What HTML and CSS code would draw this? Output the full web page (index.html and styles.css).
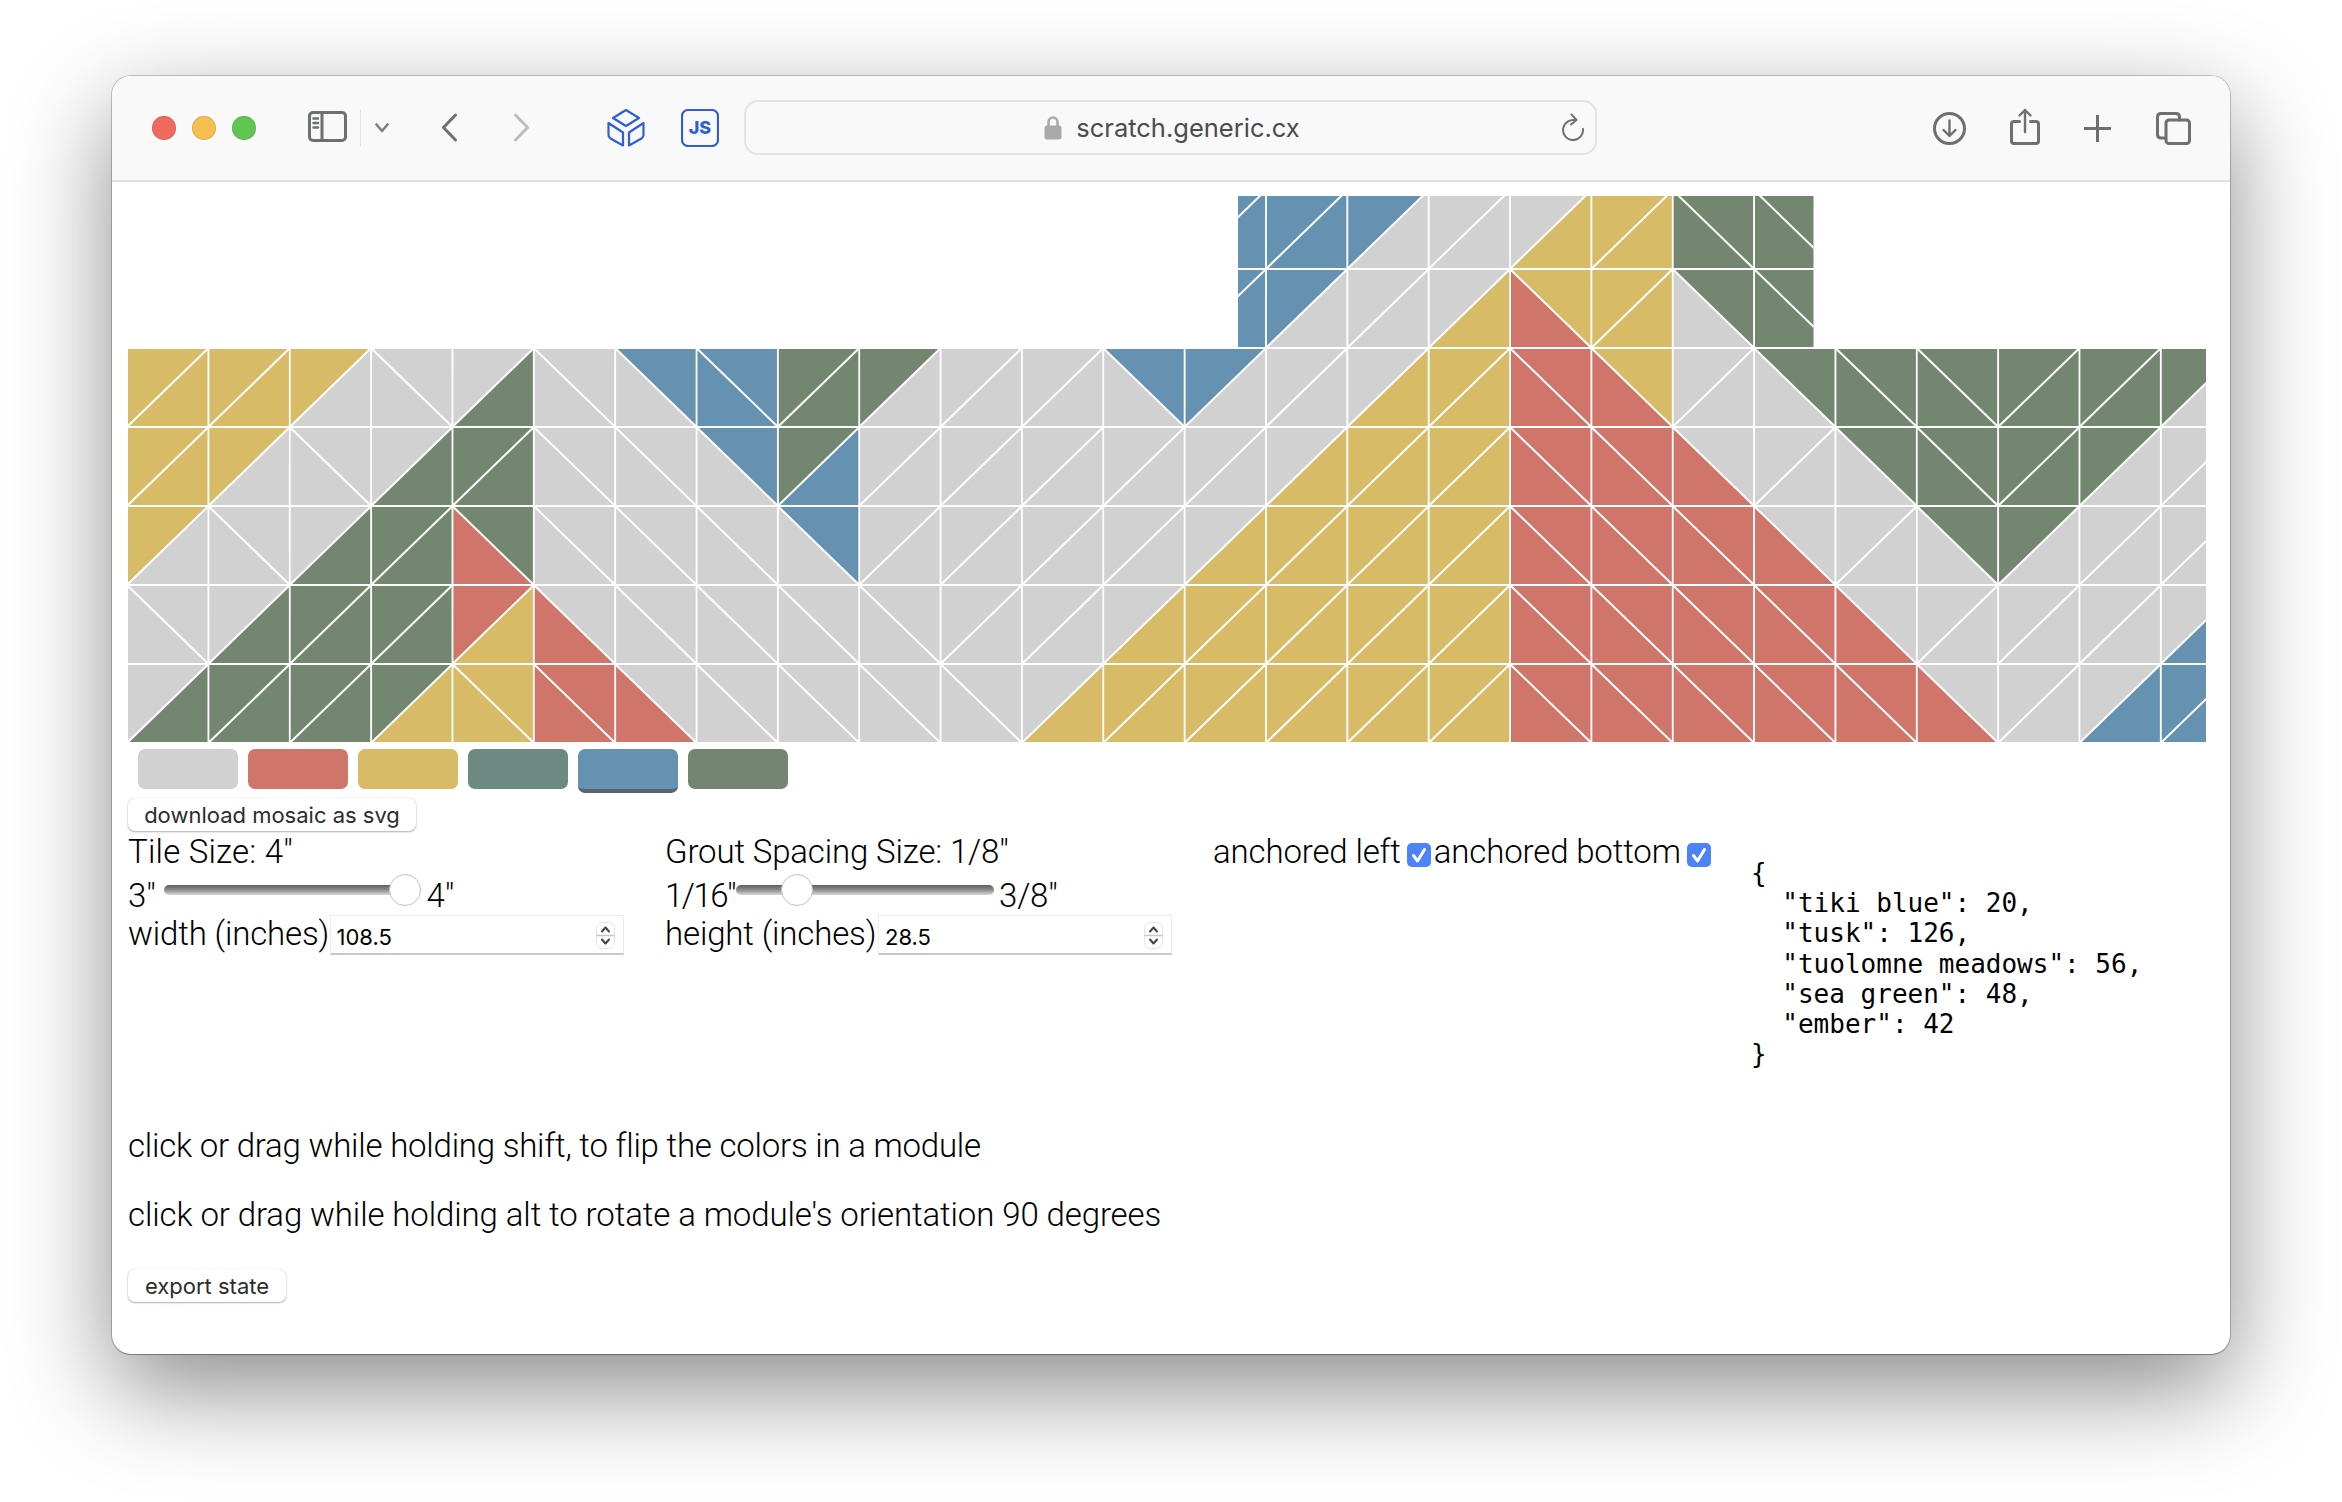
FILE: index.html
```html
<!DOCTYPE html>
<html lang="en">
<head>
<meta charset="utf-8">
<title>scratch.generic.cx</title>
<link rel="stylesheet" href="styles.css">
</head>
<body>
<div class="window">
  <header class="toolbar">
    <div class="lights"><span class="light red"></span><span class="light yellow"></span><span class="light green"></span></div>
    <svg class="ico sidebar" width="39" height="31" viewBox="0 0 39 31"><rect x="1.5" y="1.5" width="36" height="28" rx="3.5"/><path d="M14 1.5V29.5"/><path class="thin" d="M5.5 7.5H10M5.5 12H10M5.5 16.5H10"/></svg>
    <span class="divider"></span>
    <svg class="ico chev-down" width="14" height="10" viewBox="0 0 14 10"><path d="M1.5 1.5L7 8L12.5 1.5"/></svg>
    <svg class="ico back" width="17" height="29" viewBox="0 0 17 29"><path d="M14.5 2L2.5 14.5L14.5 27"/></svg>
    <svg class="ico forward" width="17" height="29" viewBox="0 0 17 29"><path d="M2.5 2L14.5 14.5L2.5 27"/></svg>
    <svg class="ext pkg" width="38" height="38" viewBox="0 0 38 38"><path d="M19 1L32 9L19 17L6 9Z"/><path d="M1.5 14L16 23.5V36.5L3.5 29.5Q1.5 28 1.5 26Z"/><path d="M36.5 14L22 23.5V36.5L34.5 29.5Q36.5 28 36.5 26Z"/></svg>
    <svg class="ext js" width="38" height="38" viewBox="0 0 38 38"><rect x="1" y="1" width="36" height="36" rx="6"/><text x="19" y="25" text-anchor="middle">JS</text></svg>
    <div class="urlbar">
      <svg class="lock" width="18" height="25" viewBox="0 0 18 25"><path class="shackle" d="M4.5 12V7a4.5 4.5 0 0 1 9 0V12"/><rect x="0.5" y="10.5" width="17" height="14" rx="2.5"/></svg>
      <span class="url">scratch.generic.cx</span>
      <svg class="ico reload" width="24" height="28" viewBox="0 0 24 28"><path class="thin" d="M15 7.5A10 10 0 1 0 22 16M10.5 1.5L15.5 7L10 11.5"/></svg>
    </div>
    <svg class="ico download" width="33" height="33" viewBox="0 0 33 33"><circle cx="16.5" cy="16.5" r="15"/><path class="thin" d="M16.5 8.5V24M10.5 18L16.5 24L22.5 18"/></svg>
    <svg class="ico share" width="30" height="37" viewBox="0 0 30 37"><path d="M9.5 13.5H4Q1.5 13.5 1.5 16V33Q1.5 35.5 4 35.5H26Q28.5 35.5 28.5 33V16Q28.5 13.5 26 13.5H20.5"/><path class="thin" d="M15 24V2M9.5 7.5L15 2L20.5 7.5"/></svg>
    <svg class="ico plus" width="27" height="27" viewBox="0 0 27 27"><path d="M13.5 0.5V26.5M0.5 13.5H26.5"/></svg>
    <svg class="ico tabs" width="35" height="33" viewBox="0 0 35 33"><path d="M8 26H5Q1.5 26 1.5 22.5V5Q1.5 1.5 5 1.5H20Q23.5 1.5 23.5 5V8"/><rect x="10" y="8" width="23.5" height="23.5" rx="3"/></svg>
  </header>

  <main class="page">
    <svg id="mosaic" class="mosaic" width="2078" height="546" viewBox="0 0 2078 546" role="img" aria-label="tile mosaic"></svg>

    <div class="swatches">
      <span class="swatch tusk"></span>
      <span class="swatch ember"></span>
      <span class="swatch tuolomne"></span>
      <span class="swatch teal"></span>
      <span class="swatch tiki selected"></span>
      <span class="swatch sea"></span>
    </div>

    <button class="btn btn-download" type="button">download mosaic as svg</button>

    <section class="controls">
      <div class="col col-tile">
        <div class="row-label">Tile Size: 4"</div>
        <div class="row-slider">
          <span class="end-label">3"</span>
          <input class="slider slider-tile" type="range" min="3" max="4" step="0.25" value="4">
          <span>4"</span>
        </div>
        <label class="row-input">
          <span class="input-label">width (inches)</span>
          <span class="num"><input class="num-field" type="number" value="108.5" step="0.5"><svg class="spin" width="19" height="27" viewBox="0 0 19 27"><rect x="0.5" y="0.5" width="18" height="26" rx="6"/><path class="sep" d="M1 13.5H18"/><path d="M6 9.5L9.5 5.5L13 9.5M6 17.5L9.5 21.5L13 17.5"/></svg></span>
        </label>
      </div>
      <div class="col col-grout">
        <div class="row-label">Grout Spacing Size: 1/8"</div>
        <div class="row-slider">
          <span class="end-label">1/16"</span>
          <input class="slider slider-grout" type="range" min="1" max="6" step="1" value="2">
          <span>3/8"</span>
        </div>
        <label class="row-input">
          <span class="input-label">height (inches)</span>
          <span class="num"><input class="num-field" type="number" value="28.5" step="0.5"><svg class="spin" width="19" height="27" viewBox="0 0 19 27"><rect x="0.5" y="0.5" width="18" height="26" rx="6"/><path class="sep" d="M1 13.5H18"/><path d="M6 9.5L9.5 5.5L13 9.5M6 17.5L9.5 21.5L13 17.5"/></svg></span>
        </label>
      </div>
      <div class="col col-anchor">
        <label class="anchor">anchored left<span class="check"><svg width="24" height="24" viewBox="0 0 24 24"><path d="M6.5 12.5L10.5 18L17.5 6.5"/></svg></span></label>
        <label class="anchor">anchored bottom<span class="check"><svg width="24" height="24" viewBox="0 0 24 24"><path d="M6.5 12.5L10.5 18L17.5 6.5"/></svg></span></label>
      </div>
      <pre class="counts">{
  "tiki blue": 20,
  "tusk": 126,
  "tuolomne meadows": 56,
  "sea green": 48,
  "ember": 42
}</pre>
    </section>

    <p class="hint hint-first">click or drag while holding shift, to flip the colors in a module</p>
    <p class="hint">click or drag while holding alt to rotate a module's orientation 90 degrees</p>

    <button class="btn btn-export" type="button">export state</button>
  </main>
</div>
<script src="app.js"></script>
</body>
</html>
```
FILE: styles.css
```css
* { box-sizing: border-box; }
html, body { margin: 0; height: 100%; }
body {
  background: #fff;
  padding: 76px 0 0 112px;
  overflow: hidden;
  font-family: Roboto, "Liberation Sans", sans-serif;
  font-weight: 300;
  color: #000;
}
.window {
  width: 2118px;
  height: 1278px;
  border-radius: 19px;
  background: #fff;
  overflow: hidden;
  box-shadow: 0 0 0 1px rgba(0,0,0,.2), 0 1px 1px rgba(0,0,0,.2), 0 35px 100px rgba(0,0,0,.46);
}

/* toolbar */
.toolbar {
  height: 106px;
  display: flex;
  align-items: center;
  padding-left: 40px;
  background: #f8f9f8;
  border-bottom: 2px solid #e0e0e0;
}
.lights { display: flex; gap: 16.5px; }
.light { width: 23.5px; height: 23.5px; border-radius: 50%; border: 1px solid rgba(0,0,0,.08); }
.light.red { background: #ee6a5e; }
.light.yellow { background: #f5bf4f; }
.light.green { background: #61c554; }
.ico { fill: none; stroke: #6e6f6f; stroke-width: 3; stroke-linecap: round; stroke-linejoin: round; flex: none; }
.ico .thin { stroke-width: 2.4; }
.sidebar { margin-left: 52px; margin-top: -3px; }
.divider { width: 1px; height: 36px; background: #e2e3e2; margin-left: 13px; margin-top: -1px; }
.chev-down { margin-left: 14px; stroke: #7d7e7e; stroke-width: 2.6; }
.back { margin-left: 52px; margin-top: -1px; }
.forward { margin-left: 55px; margin-top: -1px; stroke: #bcbdbd; }
.ext { flex: none; fill: none; stroke: #2f5fd8; stroke-width: 2.2; stroke-linejoin: round; }
.pkg { margin-left: 77px; }
.js { margin-left: 36px; }
.js text { fill: #2f5fd8; stroke: none; font: 800 18px Inter, sans-serif; }
.urlbar {
  width: 853px;
  height: 55px;
  margin-left: 25px;
  margin-top: -1px;
  border: 2px solid #e3e4e3;
  border-radius: 14px;
  position: relative;
  display: flex;
  align-items: center;
  justify-content: center;
  gap: 14px;
  padding-left: 4px;
}
.lock { fill: #a9aaaa; flex: none; }
.lock .shackle { fill: none; stroke: #a9aaaa; stroke-width: 2.6; }
.url { font: 400 25.5px Inter, sans-serif; color: #4b4c4c; }
.reload { position: absolute; right: 10px; top: 11px; }
.reload .thin { stroke-width: 2; }
.download { margin-left: 336px; }
.share { margin-left: 44px; margin-top: -4px; }
.plus { margin-left: 44px; }
.tabs { margin-left: 45px; }

/* page */
.page { padding: 14px 0 0 16px; }
.mosaic { display: block; }
.tile-g { fill: #d1d1d1; }
.tile-r { fill: #d0756a; }
.tile-y { fill: #d8bb67; }
.tile-b { fill: #6592b0; }
.tile-n { fill: #73866f; }
.diag { stroke: #fff; stroke-width: 2; }

.swatches { display: flex; align-items: flex-start; gap: 10px; margin: 7px 0 0 10px; height: 44px; }
.swatch { width: 100px; height: 40px; border-radius: 7px; box-sizing: content-box; }
.swatch.selected { border-bottom: 4px solid #5f6366; }
.tusk { background: #d1d1d1; }
.ember { background: #d0756a; }
.tuolomne { background: #d8bb67; }
.teal { background: #6d8a82; }
.tiki { background: #6592b0; }
.sea { background: #73866f; }

.btn {
  display: block;
  height: 33px;
  padding: 0;
  border: 0;
  border-radius: 7px;
  background: #fff;
  box-shadow: 0 1px 2px rgba(0,0,0,.3), 0 0 1px rgba(0,0,0,.25);
  font: 400 22px Inter, sans-serif;
  color: #2c2c2c;
}
.btn-download { margin-top: 5px; width: 288px; }
.btn-export { margin-top: 34px; width: 158px; }

.controls { display: flex; align-items: flex-start; font-size: 33px; letter-spacing: -.15px; }
.col { flex: none; padding-top: 1px; }
.col-tile { width: 537px; }
.col-grout { width: 548px; }
.col-anchor { width: 538px; display: flex; }
.row-label { height: 40px; line-height: 40px; white-space: nowrap; }
.col-tile .row-label { letter-spacing: .2px; }
.row-slider { height: 43px; display: flex; align-items: center; white-space: nowrap; }
.row-slider span { margin-top: 4px; }
.row-input { height: 40px; display: flex; align-items: center; white-space: nowrap; }
.col-tile .end-label { width: 35.5px; }
.col-grout .end-label { width: 70.5px; letter-spacing: -1.5px; }
.col-tile .input-label { width: 201.5px; }
.col-grout .input-label { width: 213px; }
.input-label { margin-top: -4px; }

.slider {
  -webkit-appearance: none;
  appearance: none;
  height: 32px;
  margin: 0 6px 8px 0;
  padding: 0;
  background: transparent;
  flex: none;
}
.slider-tile { width: 257px; }
.slider-grout { width: 258.5px; margin-right: 5px; }
.slider::-webkit-slider-runnable-track {
  height: 10px;
  border-radius: 5px;
  background: linear-gradient(#5e5e5e, #8e8e8e 50%, #d8d8d8);
}
.slider::-webkit-slider-thumb {
  -webkit-appearance: none;
  width: 32px;
  height: 32px;
  margin-top: -11px;
  border-radius: 50%;
  background: #fff;
  border: 1px solid #c4c4c4;
}

.num { position: relative; display: block; }
.num-field {
  display: block;
  width: 294px;
  height: 40px;
  padding: 5px 0 0 6px;
  border: 1px solid #ececec;
  border-bottom: 2px solid #c9c9c9;
  background: #fff;
  font: 400 22px Inter, sans-serif;
  color: #000;
  outline: none;
  -moz-appearance: textfield;
}
.num-field::-webkit-inner-spin-button,
.num-field::-webkit-outer-spin-button { -webkit-appearance: none; margin: 0; }
.spin { position: absolute; right: 9px; top: 7px; fill: none; stroke: #444; stroke-width: 2; stroke-linecap: round; stroke-linejoin: round; }
.spin rect { stroke: #e4e4e4; stroke-width: 1; fill: #fff; }
.spin .sep { stroke: #c8c8c8; stroke-width: 1.5; }

.anchor { display: flex; align-items: center; height: 40px; line-height: 40px; white-space: nowrap; gap: 6px; margin-right: 3px; }
.check { display: block; width: 24px; height: 24px; margin-top: 6px; border-radius: 5px; background: #4c84f8; }
.check svg { display: block; fill: none; stroke: #fff; stroke-width: 3; stroke-linecap: round; stroke-linejoin: round; }

.counts {
  margin: 27px 0 0;
  font: 400 26px/30.2px "DejaVu Sans Mono", monospace;
  letter-spacing: 0;
  color: #000;
}

.hint { margin: 0; height: 40px; line-height: 40px; font-size: 33px; letter-spacing: -.11px; white-space: nowrap; }
.hint-first { margin-top: 57px; margin-bottom: 29px; letter-spacing: -.22px; }
```
FILE: app.js
```js
// Layout of the mosaic: each cell is a diagonal direction and two colours.
// "/" cells list upper-left then lower-right; "\" cells list lower-left then upper-right.
var X0 = 0, Y0 = 153, PX = 81.35, PY = 79, W = 79.5, H = 77;

var UPPER = {
  startCol: 13,
  rows: [
    "/bb /bb /bg /gg /gy /yy \\nn \\nn",
    "/bb /bg /gg /gy \\ry /yy \\gn \\nn"
  ]
};
var MAIN = [
  "/yy /yy /yg \\gg /gn \\gg \\gb \\bb /nn /ng /gg /gg \\gb /bg /gg /gy /yy \\rr \\ry /gg \\gn \\nn \\nn /nn /nn /ng",
  "/yy /yg \\gg /gn /nn \\gg \\gg \\gb /nb /gg /gg /gg /gg /gg /gy /yy /yy \\rr \\rr \\rg /gg \\gn \\nn /nn /ng /gg",
  "/yg \\gg /gn /nn \\rn \\gg \\gg \\gg \\gb /gg /gg /gg /gg /gy /yy /yy /yy \\rr \\rr \\rr \\rg /gg \\gn /ng /gg /gg",
  "\\gg /gn /nn /nn /ry \\rg \\gg \\gg \\gg \\gg /gg /gg /gy /yy /yy /yy /yy \\rr \\rr \\rr \\rr \\rg /gg /gg /gg /gb",
  "/gn /nn /nn /ny \\yy \\rr \\rg \\gg \\gg \\gg \\gg /gy /yy /yy /yy /yy /yy \\rr \\rr \\rr \\rr \\rr \\rg /gg /gb /bb"
];

var NS = "http://www.w3.org/2000/svg";
var svg = document.getElementById("mosaic");

function el(name, attrs, parent) {
  var node = document.createElementNS(NS, name);
  for (var key in attrs) node.setAttribute(key, attrs[key]);
  parent.appendChild(node);
  return node;
}

function cell(parent, col, row, token) {
  var x = X0 + col * PX, y = Y0 + row * PY, r = x + W, b = y + H;
  var a, c, line;
  if (token[0] === "/") {
    a = [x, y, r, y, x, b];
    c = [r, y, r, b, x, b];
    line = [x, b, r, y];
  } else {
    a = [x, y, r, b, x, b];
    c = [x, y, r, y, r, b];
    line = [x, y, r, b];
  }
  el("polygon", { points: a.join(" "), "class": "tile-" + token[1] }, parent);
  el("polygon", { points: c.join(" "), "class": "tile-" + token[2] }, parent);
  el("line", { x1: line[0], y1: line[1], x2: line[2], y2: line[3], "class": "diag" }, parent);
}

var defs = el("defs", {}, svg);
var clip = el("clipPath", { id: "upper-clip" }, defs);
el("rect", { x: 1110, y: 0, width: 575.5, height: 151 }, clip);

var upper = el("g", { "clip-path": "url(#upper-clip)" }, svg);
UPPER.rows.forEach(function (line, i) {
  line.split(" ").forEach(function (t, j) { cell(upper, UPPER.startCol + j, i - 2, t); });
});
var main = el("g", {}, svg);
MAIN.forEach(function (line, i) {
  line.split(" ").forEach(function (t, j) { cell(main, j, i, t); });
});
```
